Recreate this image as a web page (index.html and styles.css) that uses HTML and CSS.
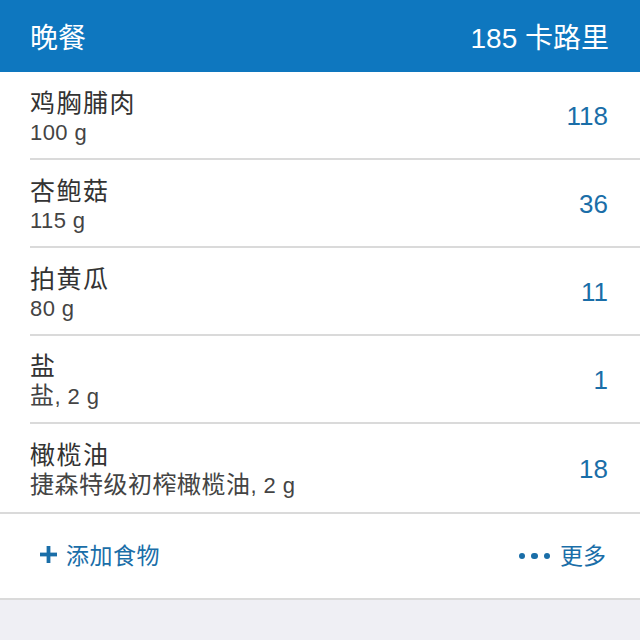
FILE: index.html
```html
<!DOCTYPE html>
<html lang="zh">
<head>
<meta charset="utf-8">
<link rel="stylesheet" href="styles.css">
</head>
<body>
<div class="page">
  <header class="head">
    <span class="meal">晚餐</span>
    <span class="total">185 卡路里</span>
  </header>
  <ul class="list">
    <li class="row">
      <div class="info"><div class="name">鸡胸脯肉</div><div class="sub">100 g</div></div>
      <div class="cal">118</div>
    </li>
    <li class="row">
      <div class="info"><div class="name">杏鲍菇</div><div class="sub">115 g</div></div>
      <div class="cal">36</div>
    </li>
    <li class="row">
      <div class="info"><div class="name">拍黄瓜</div><div class="sub">80 g</div></div>
      <div class="cal">11</div>
    </li>
    <li class="row">
      <div class="info"><div class="name">盐</div><div class="sub"><span class="cn">盐</span>, 2 g</div></div>
      <div class="cal">1</div>
    </li>
    <li class="row last">
      <div class="info"><div class="name">橄榄油</div><div class="sub"><span class="cn">捷森特级初榨橄榄油</span>, 2 g</div></div>
      <div class="cal">18</div>
    </li>
  </ul>
  <div class="foot">
    <span class="add"><svg class="plus" viewBox="0 0 18 18" width="18" height="18"><rect x="7" y="0" width="4" height="18" fill="#1a6ea8"/><rect x="0" y="7" width="18" height="4" fill="#1a6ea8"/></svg>添加食物</span>
    <span class="more"><span class="dots"><i></i><i></i><i></i></span>更多</span>
  </div>
</div>
</body>
</html>
```
FILE: styles.css
```css
* { box-sizing: border-box; }
html, body { margin: 0; padding: 0; }
body {
  background: #efeff4;
  font-family: "Liberation Sans", "Noto Sans CJK SC", sans-serif;
  width: 640px;
  height: 640px;
  overflow: hidden;
}
.head {
  height: 72px;
  background: #0e77bf;
  color: #fff;
  display: flex;
  align-items: center;
  justify-content: space-between;
  padding: 0 31px 0 30px;
  font-size: 28px;
}
.list {
  list-style: none;
  margin: 0;
  padding: 0 0 0 30px;
  background: #fff;
}
.row {
  display: flex;
  align-items: center;
  justify-content: space-between;
  height: 88px;
  padding-right: 32px;
  border-bottom: 2px solid #dadada;
}
.row.last { border-bottom: none; }
.info { display: flex; flex-direction: column; padding-top: 5px; }
.name {
  font-size: 25px;
  letter-spacing: 1.5px;
  color: #333;
  line-height: 30px;
}
.sub {
  font-size: 22px;
  color: #444;
  line-height: 30px;
  letter-spacing: 0.4px;
}
.sub .cn { font-size: 24px; letter-spacing: 0.5px; }
.cal {
  font-size: 26px;
  color: #1a6ea8;
  padding-top: 2px;
}
.foot {
  height: 88px;
  background: #fff;
  border-top: 2px solid #dadada;
  border-bottom: 2px solid #dadada;
  display: flex;
  align-items: center;
  justify-content: space-between;
  padding: 0 34px 4px 40px;
  color: #1a6ea8;
  font-size: 23px;
}
.add, .more { display: flex; align-items: center; }
.add { letter-spacing: 0.5px; }
.plus { margin-right: 9px; width: 17px; height: 17px; }
.dots { display: flex; gap: 6px; margin-right: 10px; padding-top: 4px; margin-left: 2px; }
.dots i { width: 6.5px; height: 6.5px; border-radius: 50%; background: #1a6ea8; display: block; }
```
